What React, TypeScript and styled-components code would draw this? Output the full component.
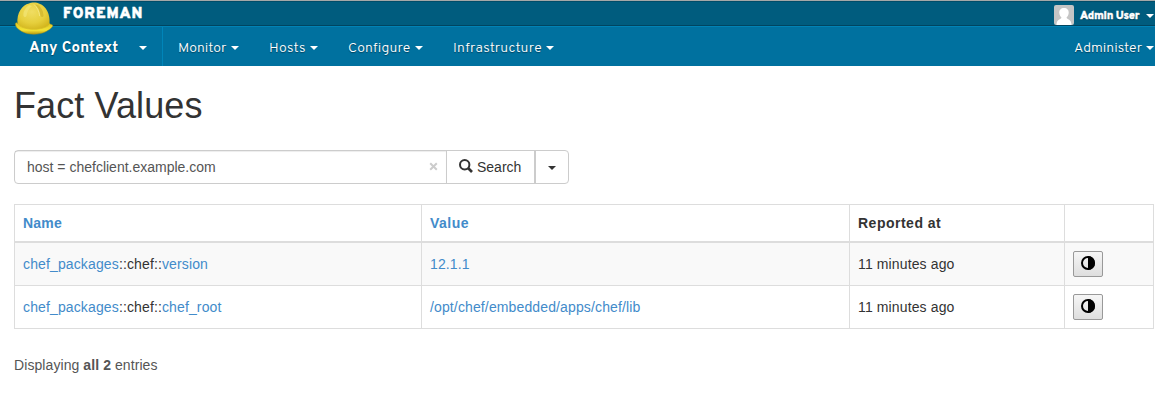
import React from "react";
import styled, { createGlobalStyle } from "styled-components";

const Global = createGlobalStyle`
  * { box-sizing: border-box; }
  body { margin: 0; background: #fff; color: #333; font: 14px/20px "Liberation Sans", Arial, sans-serif; overflow: hidden; }
  a { color: #428bca; text-decoration: none; }
`;

const TopBar = styled.header`
  display: flex;
  align-items: center;
  height: 26px;
  background: #005c7e;
  border-top: 1px solid #a5a8a8;
  border-bottom: 1px solid #004560;
  box-shadow: inset 0 1px #004d69;
  color: #fff;
  padding: 0 1px 0 63px;
  position: relative;
`;
const Brand = styled.span`
  flex: 1;
  font: 900 15px/24px Overpass, Lato, sans-serif;
  letter-spacing: 0.95px;
  -webkit-text-stroke: 0.4px #fff;
  padding-top: 4px;
`;
const Helmet = styled.svg`
  position: absolute;
  left: 14px;
  top: 0;
  z-index: 2;
`;
const Avatar = styled.svg`
  margin: 4px 6px 0 0;
`;
const UserName = styled.span`
  font: 900 11px/22px Overpass, Lato, sans-serif;
  letter-spacing: -0.25px;
  -webkit-text-stroke: 0.3px #fff;
  padding-top: 5px;
  width: 66px;
  white-space: nowrap;
  text-shadow: 0 1px 1px #003b52;
`;
const Caret = styled.i<{ $dark?: boolean }>`
  display: block;
  width: 0;
  height: 0;
  border: 4px solid transparent;
  border-top-color: ${(p) => (p.$dark ? "#333" : "#fff")};
  border-bottom: 0;
`;
const UserCaret = styled(Caret)`
  margin-top: 6px;
`;
const NavCaret = styled(Caret)`
  margin-bottom: 2px;
`;

const Nav = styled.nav`
  display: flex;
  height: 40px;
  background: #00719f;
  border-top: 1px solid #0082b5;
  color: #fff;
  padding-right: 1px;
`;
const Context = styled.div`
  display: flex;
  align-items: center;
  justify-content: space-between;
  width: 163px;
  padding: 4px 15px 0 29px;
  border-right: 1px solid #0085b9;
  font: 700 15px/20px Overpass, "Noto Sans", sans-serif;
  letter-spacing: 0.25px;
  text-shadow: 0 1px 1px #00425e;
`;
const NavItem = styled.div<{ $width: number; $spacing?: number }>`
  display: flex;
  align-items: center;
  justify-content: space-between;
  width: ${(p) => p.$width}px;
  padding-top: 5px;
  margin-left: 15px;
  margin-right: 15px;
  font: 300 14px/20px Overpass, "Open Sans", sans-serif;
  letter-spacing: ${(p) => p.$spacing ?? 0}px;
  white-space: nowrap;
  text-shadow: 0 1px 1px #00425e;
`;
const AdminItem = styled(NavItem)`
  margin: 0 0 0 auto;
`;

const Page = styled.main`
  padding: 0 1px 0 14px;
`;
const Title = styled.h1`
  margin: 20px 0 24px;
  font-size: 36px;
  line-height: 40px;
  font-weight: 400;
  letter-spacing: 0.1px;
`;
const SearchGroup = styled.form`
  display: flex;
  width: 555px;
  height: 34px;
  border: 1px solid #ccc;
  border-radius: 4px;
  color: #333;
`;
const Query = styled.div`
  flex: 1;
  display: flex;
  justify-content: space-between;
  padding: 6px 8px 0 12px;
  color: #555;
  box-shadow: inset 0 1px 1px rgba(0, 0, 0, 0.075);
`;
const Clear = styled.svg`
  margin-top: 5px;
`;
const SearchButton = styled.div`
  display: flex;
  width: 90px;
  gap: 4px;
  padding: 6px 0 0 12px;
  border-left: 1px solid #ccc;
  border-right: 2px solid #ccc;
`;
const SearchIcon = styled.svg`
  margin-top: 2px;
`;
const Toggle = styled.div`
  display: flex;
  width: 32px;
  align-items: center;
  justify-content: center;
  padding-top: 2px;
`;

const Table = styled.table`
  margin-top: 20px;
  width: 1140px;
  table-layout: fixed;
  border-collapse: collapse;
`;
const Cell = styled.td<{ $button?: boolean }>`
  height: 43px;
  border: 1px solid #ddd;
  padding: ${(p) => (p.$button ? 8 : 11)}px 8px 0;
  letter-spacing: 0.13px;
  vertical-align: top;
`;
const Head = styled.th`
  height: 37px;
  border: 1px solid #ddd;
  border-bottom-width: 2px;
  padding: 8px 8px 0;
  text-align: left;
  vertical-align: top;
  letter-spacing: 0.5px;
`;
const NameHead = styled(Head)`
  letter-spacing: 0.2px;
`;
const Row = styled.tr<{ $striped?: boolean }>`
  height: ${(p) => (p.$striped ? 44 : 43)}px;
  background: ${(p) => (p.$striped ? "#f9f9f9" : "#fff")};
`;
const ChartButton = styled.button`
  display: flex;
  align-items: center;
  justify-content: center;
  width: 30px;
  height: 26px;
  padding: 0 0 2px;
  border: 1px solid #999;
  border-radius: 2px;
  background: linear-gradient(#f6f6f6, #dedede);
`;
const Footer = styled.p`
  margin: 26px 0 0;
  color: #555;
  letter-spacing: 0.08px;
`;

const facts = [
  { leaf: "version", value: "12.1.1" },
  { leaf: "chef_root", value: "/opt/chef/embedded/apps/chef/lib" },
];

const HelmetLogo = () => (
  <Helmet width="40" height="34" viewBox="0 0 40 34">
    <defs>
      <radialGradient id="dome" cx=".45" cy=".35" r=".7">
        <stop offset="0" stopColor="#f0dd62" />
        <stop offset=".6" stopColor="#e6cf3c" />
        <stop offset="1" stopColor="#d2b41c" />
      </radialGradient>
      <linearGradient id="brim" x1="0" y1="0" x2="0" y2="1">
        <stop offset="0" stopColor="#e0c620" />
        <stop offset=".65" stopColor="#f3e335" />
        <stop offset="1" stopColor="#b99c10" />
      </linearGradient>
    </defs>
    <path d="M1.5 22.5C2 21 3 22 4 23L35 22.5L38.5 24C39.5 26 35 29 31 31C25 33.8 15 34 9 31C5 29 1 26 1.5 22.5Z" fill="url(#brim)" stroke="#ad9215" strokeWidth=".5" />
    <path d="M3.5 23C2.5 12 8 4 15 2.5C18 .8 23 1.2 25.5 2.8C32 5 36.5 13 35.5 23C31 29.5 11 30.5 3.5 23Z" fill="url(#dome)" />
    <path d="M15 4C11 7 9 11 9.500 15C10 16.500 12 16.500 12.500 15C13 11 15 7 18 5Z" fill="#f2e474" opacity=".75" />
    <path d="M21 3.500C24 6 26 10 26.500 15C28 17 30 16 29.500 14C29 9 27 6 24 4Z" fill="#cfb42c" opacity=".75" />
    <path d="M20 3.500C23 6 25 10 25.700 15" fill="none" stroke="#f5e98a" strokeWidth=".8" />
    <path d="M5 24.500C12 29.500 27 29.500 35 24.500" fill="none" stroke="#d8bf2a" strokeWidth=".8" />
  </Helmet>
);

export default function App() {
  return (
    <>
      <Global />
      <TopBar>
        <HelmetLogo />
        <Brand>FOREMAN</Brand>
        <Avatar width="20" height="20" viewBox="0 0 20 20">
          <rect width="20" height="20" rx="2" fill="#c5c5c5" />
          <path d="M10 3C13 3 15 5 14.700 8C14.500 10 13.500 11.500 12.500 12.500C13 14.500 17.500 14 17.500 20H2.500C2.500 14 7 14.500 7.500 12.500C6.500 11.500 5.500 10 5.300 8C5 5 7 3 10 3Z" fill="#fff" />
        </Avatar>
        <UserName>Admin User</UserName>
        <UserCaret />
      </TopBar>
      <Nav>
        <Context>Any Context <NavCaret /></Context>
        <NavItem $width={61}>Monitor <NavCaret /></NavItem>
        <NavItem $width={49} $spacing={0.3}>Hosts <NavCaret /></NavItem>
        <NavItem $width={75} $spacing={0.15}>Configure <NavCaret /></NavItem>
        <NavItem $width={101} $spacing={0.3}>Infrastructure <NavCaret /></NavItem>
        <AdminItem $width={80}>Administer <NavCaret /></AdminItem>
      </Nav>
      <Page>
        <Title>Fact Values</Title>
        <SearchGroup>
          <Query>
            host = chefclient.example.com
            <Clear width="9" height="9" viewBox="0 0 9 9">
              <path d="M1.200 1.200L7.800 7.800M7.800 1.200L1.200 7.800" stroke="#ccc" strokeWidth="2" />
            </Clear>
          </Query>
          <SearchButton>
            <SearchIcon width="14" height="14" viewBox="0 0 14 14" fill="none" stroke="#333">
              <circle cx="5.700" cy="5.700" r="4.700" strokeWidth="2" />
              <path d="M9 9L13 13" strokeWidth="2.600" />
            </SearchIcon>
            Search
          </SearchButton>
          <Toggle><Caret $dark /></Toggle>
        </SearchGroup>
        <Table>
          <colgroup>
            <col style={{ width: 407 }} />
            <col style={{ width: 428 }} />
            <col style={{ width: 215 }} />
            <col style={{ width: 89 }} />
          </colgroup>
          <thead>
            <tr>
              <NameHead><a>Name</a></NameHead>
              <Head><a>Value</a></Head>
              <Head>Reported at</Head>
              <Head />
            </tr>
          </thead>
          <tbody>
            {facts.map((f, i) => (
              <Row key={f.leaf} $striped={i === 0}>
                <Cell><a>chef_packages</a>::chef::<a>{f.leaf}</a></Cell>
                <Cell><a>{f.value}</a></Cell>
                <Cell>11 minutes ago</Cell>
                <Cell $button>
                  <ChartButton>
                    <svg width="14" height="14" viewBox="0 0 14 14">
                      <circle cx="7" cy="7" r="6" fill="none" stroke="#000" strokeWidth="2" />
                      <path d="M7 0A7 7 0 0 1 7 14Z" />
                    </svg>
                  </ChartButton>
                </Cell>
              </Row>
            ))}
          </tbody>
        </Table>
        <Footer>Displaying <b>all 2</b> entries</Footer>
      </Page>
    </>
  );
}
